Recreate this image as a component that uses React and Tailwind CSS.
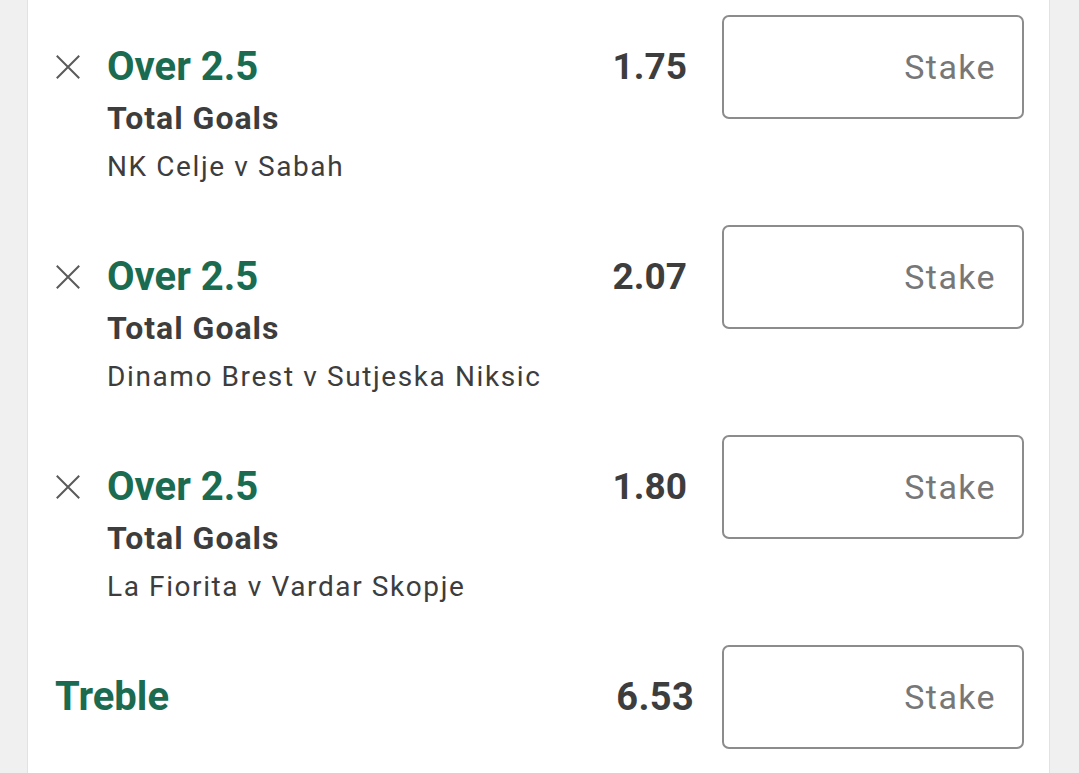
import React from 'react';

const bets = [
  { sel: 'Over 2.5', market: 'Total Goals', event: 'NK Celje v Sabah', odds: '1.75' },
  { sel: 'Over 2.5', market: 'Total Goals', event: 'Dinamo Brest v Sutjeska Niksic', odds: '2.07' },
  { sel: 'Over 2.5', market: 'Total Goals', event: 'La Fiorita v Vardar Skopje', odds: '1.80' },
];

function CloseIcon() {
  return (
    <svg width="24" height="24" viewBox="0 0 24 24" fill="none" stroke="#5a5a5a" strokeWidth="2" strokeLinecap="square">
      <path d="M1.5 1.5L22.5 22.5M22.5 1.5L1.5 22.5" />
    </svg>
  );
}

function StakeBox() {
  return (
    <div className="w-[302px] h-[104px] shrink-0 border-2 border-[#8c8c8c] rounded-[7px] flex items-center justify-end pr-[26px]">
      <span className="text-[34px] tracking-[1.4px] text-[#777777]">Stake</span>
    </div>
  );
}

export default function App() {
  return (
    <div className="w-[1079px] h-[773px] overflow-hidden bg-[#f0f0f0] flex" style={{ fontFamily: 'Roboto, "Liberation Sans", sans-serif' }}>
      <div className="w-[28px] shrink-0 border-r border-[#e2e2e2]" />
      <div className="w-[1022px] bg-white border-r border-[#e2e2e2] pl-[27px] pr-[25px]">
        {bets.map((b, i) => (
          <div key={i} className="h-[210px] flex items-start">
            <div className="flex-1 flex items-start pt-[43px]">
              <div className="w-[52px] h-[48px] flex items-center pl-[1px]">
                <CloseIcon />
              </div>
              <div className="flex flex-col">
                <span className="text-[40px] leading-[48px] font-bold text-[#1b6b50]">{b.sel}</span>
                <span className="text-[32px] leading-[54px] font-bold tracking-[1px] text-[#3d3d3d]">{b.market}</span>
                <span className="text-[28px] leading-[43px] tracking-[1.6px] text-[#3d3d3d]">{b.event}</span>
              </div>
            </div>
            <div className="flex items-center mt-[15px] h-[104px]">
              <span className="text-[37px] font-bold text-[#3d3d3d] mr-[35px]">{b.odds}</span>
              <StakeBox />
            </div>
          </div>
        ))}
        <div className="h-[210px] flex items-start">
          <div className="flex-1 h-[104px] mt-[15px] flex items-center">
            <span className="text-[40px] font-bold text-[#1b6b50]">Treble</span>
          </div>
          <div className="flex items-center mt-[15px] h-[104px]">
            <span className="text-[38px] font-bold tracking-[0.3px] text-[#3d3d3d] mr-[28px]">6.53</span>
            <StakeBox />
          </div>
        </div>
      </div>
    </div>
  );
}
